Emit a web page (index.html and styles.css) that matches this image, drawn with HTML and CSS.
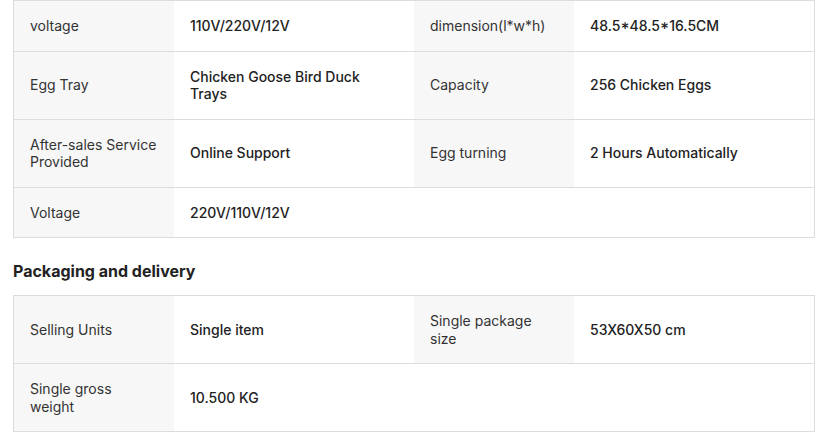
FILE: index.html
```html
<!DOCTYPE html>
<html>
<head>
<meta charset="utf-8">
<link rel="stylesheet" href="styles.css">
</head>
<body>
<div class="page">
  <div class="spec">
    <div class="row">
      <div class="label">voltage</div>
      <div class="value">110V/220V/12V</div>
      <div class="label">dimension(l*w*h)</div>
      <div class="value">48.5*48.5*16.5CM</div>
    </div>
    <div class="row">
      <div class="label">Egg Tray</div>
      <div class="value">Chicken Goose Bird Duck Trays</div>
      <div class="label">Capacity</div>
      <div class="value">256 Chicken Eggs</div>
    </div>
    <div class="row">
      <div class="label">After-sales Service Provided</div>
      <div class="value">Online Support</div>
      <div class="label">Egg turning</div>
      <div class="value">2 Hours Automatically</div>
    </div>
    <div class="row">
      <div class="label">Voltage</div>
      <div class="value">220V/110V/12V</div>
    </div>
  </div>
  <h2 class="section-title">Packaging and delivery</h2>
  <div class="spec">
    <div class="row">
      <div class="label">Selling Units</div>
      <div class="value">Single item</div>
      <div class="label">Single package size</div>
      <div class="value">53X60X50 cm</div>
    </div>
    <div class="row">
      <div class="label">Single gross weight</div>
      <div class="value">10.500 KG</div>
    </div>
  </div>
</div>
</body>
</html>
```
FILE: styles.css
```css
html, body {
  margin: 0;
  padding: 0;
  background: #fff;
}
body {
  font-family: Inter, "Noto Sans", sans-serif;
  font-size: 14px;
  color: #222;
}
.page {
  padding: 0 0 0 13px;
  width: 802px;
}
.spec {
  border: 1px solid #dcdcdc;
}
.row {
  display: grid;
  grid-template-columns: 160px 240px 160px 240px;
  border-bottom: 1px solid #dcdcdc;
}
.row:last-child {
  border-bottom: none;
}
.label, .value {
  display: flex;
  align-items: center;
  padding: 16px 16px;
  line-height: 17.5px;
}
.label {
  background: #f7f7f7;
  color: #333;
  font-weight: 400;
}
.value {
  color: #222;
  font-weight: 500;
  padding-right: 40px;
}
.section-title {
  margin: 0;
  padding: 23px 0 14px;
  font-size: 16px;
  line-height: 20px;
  font-weight: 700;
  color: #222;
}
```
